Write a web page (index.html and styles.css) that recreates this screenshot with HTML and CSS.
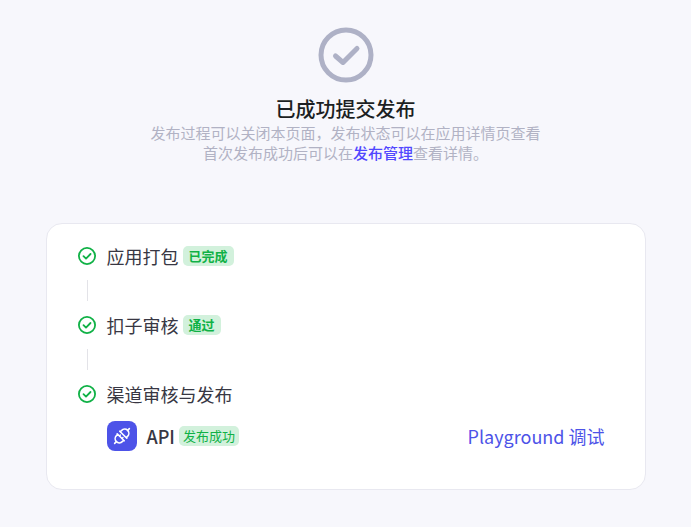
FILE: index.html
```html
<!DOCTYPE html>
<html lang="zh-CN">
<head>
  <meta charset="UTF-8">
  <meta name="viewport" content="width=device-width, initial-scale=1.0">
  <title>已成功提交发布</title>
  <link rel="stylesheet" href="styles.css">
</head>
<body>
  <header class="result">
    <svg class="result-icon" viewBox="0 0 56 56" fill="none" stroke="currentColor" stroke-width="5" aria-hidden="true">
      <circle cx="28" cy="28" r="25"/>
      <path d="M17.5 29 L25 35.5 L39 21.5" stroke-linecap="round" stroke-linejoin="round"/>
    </svg>
    <h1 class="result-title">已成功提交发布</h1>
    <p class="result-text">发布过程可以关闭本页面，发布状态可以在应用详情页查看</p>
    <p class="result-text">首次发布成功后可以在<a class="result-link" href="#">发布管理</a>查看详情。</p>
  </header>

  <main class="card">
    <ol class="steps">
      <li class="step">
        <div class="step-head">
          <svg class="step-icon" viewBox="0 0 18 18" fill="none" stroke="currentColor" stroke-width="1.8" aria-hidden="true">
            <circle cx="9" cy="9" r="8.1"/>
            <path d="M5.5 9.2 L8 11.6 L12.5 7" stroke-linecap="round" stroke-linejoin="round"/>
          </svg>
          <span class="step-name">应用打包</span>
          <span class="tag tag-strong">已完成</span>
        </div>
      </li>
      <li class="step">
        <div class="step-head">
          <svg class="step-icon" viewBox="0 0 18 18" fill="none" stroke="currentColor" stroke-width="1.8" aria-hidden="true">
            <circle cx="9" cy="9" r="8.1"/>
            <path d="M5.5 9.2 L8 11.6 L12.5 7" stroke-linecap="round" stroke-linejoin="round"/>
          </svg>
          <span class="step-name">扣子审核</span>
          <span class="tag tag-strong">通过</span>
        </div>
      </li>
      <li class="step">
        <div class="step-head">
          <svg class="step-icon" viewBox="0 0 18 18" fill="none" stroke="currentColor" stroke-width="1.8" aria-hidden="true">
            <circle cx="9" cy="9" r="8.1"/>
            <path d="M5.5 9.2 L8 11.6 L12.5 7" stroke-linecap="round" stroke-linejoin="round"/>
          </svg>
          <span class="step-name">渠道审核与发布</span>
        </div>
        <div class="channel">
          <svg class="channel-icon" viewBox="0 0 30 30" fill="none" aria-hidden="true">
            <rect width="30" height="30" rx="8" fill="#4d53e8"/>
            <g transform="rotate(-45 15 15)" stroke="#fff" stroke-width="1.6" stroke-linecap="round" stroke-linejoin="round">
              <path d="M4.6 15 H7"/>
              <path d="M13.2 10 V20 M13.2 10.8 H11.6 C9 10.8 7 12.6 7 15 C7 17.4 9 19.2 11.6 19.2 H13.2"/>
              <path d="M13.2 13.2 H14.6 M13.2 16.8 H14.6" stroke-width="1.3"/>
              <path d="M16.8 10 V20 M16.8 10.8 H18.4 C21 10.8 23 12.6 23 15 C23 17.4 21 19.2 18.4 19.2 H16.8"/>
              <path d="M23 15 H25.4"/>
            </g>
          </svg>
          <span class="channel-name">API</span>
          <span class="tag">发布成功</span>
          <a class="channel-link" href="#">Playground 调试</a>
        </div>
      </li>
    </ol>
  </main>
</body>
</html>
```
FILE: styles.css
```css
* {
  box-sizing: border-box;
}

body {
  margin: 0;
  padding: 27px 24px;
  background-color: #f7f7fc;
  color: #383743;
  font-family: "Noto Sans CJK SC", sans-serif;
}

a {
  text-decoration: none;
}

a:hover {
  text-decoration: underline;
}

.result {
  display: flex;
  flex-direction: column;
  align-items: center;
  text-align: center;
}

.result-icon {
  width: 56px;
  height: 56px;
  color: #aeb1c6;
}

.result-title {
  margin: 12px 0 0;
  font-size: 20px;
  font-weight: 500;
  line-height: 28px;
  color: #1c1f23;
}

.result-text {
  margin: 0;
  font-size: 15px;
  line-height: 20px;
  color: #b1b2c4;
}

.result-link {
  font-weight: 500;
  color: #5147ff;
}

.card {
  max-width: 600px;
  margin: 60px auto 0;
  padding: 19px 40px 38px 31px;
  background-color: #fff;
  border: 1px solid #e8e8f0;
  border-radius: 16px;
}

.steps {
  margin: 0;
  padding: 0;
  list-style: none;
}

.step-head {
  display: flex;
  align-items: center;
  height: 26px;
}

/* line between two steps */
.step:not(:last-child)::after {
  content: "";
  display: block;
  width: 1px;
  height: 21px;
  margin: 11px 9px;
  background-color: #e3e3e8;
}

.step-icon {
  flex: none;
  width: 18px;
  height: 18px;
  margin-right: 11px;
  color: #10b146;
}

.step-name,
.channel-name,
.channel-link {
  font-size: 18px;
  line-height: 26px;
}

.tag {
  margin-left: 4px;
  padding: 0 4px;
  border-radius: 5px;
  background-color: #d2f1dc;
  color: #10b146;
  font-size: 13px;
  line-height: 20px;
}

.tag-strong {
  padding: 0 6px;
  font-weight: 700;
}

.channel {
  display: flex;
  align-items: center;
  margin: 14px 0 0 29px;
}

.channel-icon {
  flex: none;
  width: 30px;
  height: 30px;
  margin-right: 10px;
}

.channel-name {
  font-weight: 500;
}

.channel-link {
  margin-left: auto;
  color: #4d53e8;
}
```
